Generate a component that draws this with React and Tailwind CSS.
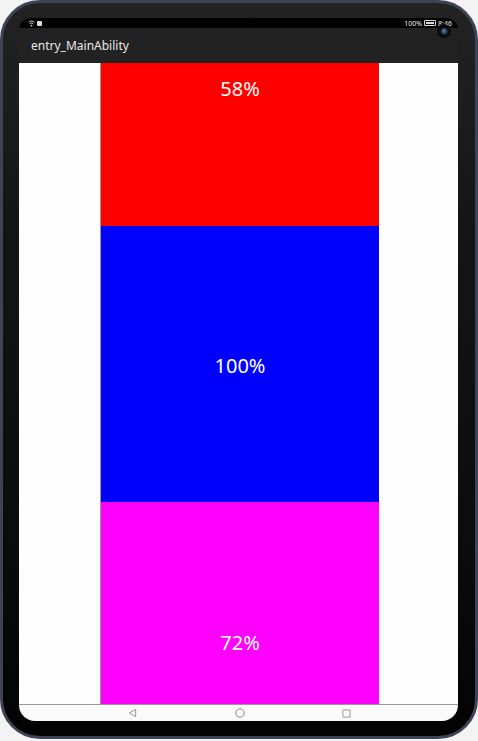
import React from "react";

export default function App() {
  return (
    <div className="w-[478px] h-[741px] bg-[#f3f3f3] font-['Noto_Sans',sans-serif]">
      <div className="relative w-[478px] h-[739px] rounded-[40px] border-[3px] border-[#3d4457] bg-[linear-gradient(180deg,#232323_0%,#151515_30%,#0a0a0a_80%,#030303_100%)] pt-[15px] pl-[16px] pr-[17px] pb-[15px]">
        <div className="flex flex-col h-full rounded-t-[12px] rounded-b-[16px] overflow-hidden">
          {/* status bar */}
          <div className="h-[10px] bg-black flex items-center justify-between pl-[9px] pr-[6px] text-white">
            <div className="flex items-center gap-[2px]">
              <svg width="7" height="7" viewBox="0 0 12 12">
                <path d="M1 4 A7 7 0 0 1 11 4" stroke="#ddd" strokeWidth="1.5" fill="none" />
                <path d="M3 6.5 A4.5 4.5 0 0 1 9 6.5" stroke="#ddd" strokeWidth="1.5" fill="none" />
                <circle cx="6" cy="9.5" r="1.5" fill="#ddd" />
              </svg>
              <div className="w-[5px] h-[5px] bg-[#ddd] rounded-[1px]" />
            </div>
            <div className="flex items-center gap-[2px] text-[7px] leading-none text-[#eee]">
              <span>100%</span>
              <div className="w-[12px] h-[6px] border border-[#ddd] rounded-[1px] p-[1px]">
                <div className="w-full h-full bg-[#ddd]" />
              </div>
              <span>8:46</span>
            </div>
          </div>
          {/* title bar */}
          <div className="h-[35px] bg-[#222222] flex items-center pl-[12px] text-[12px] text-[#e8e8e8]">
            entry_MainAbility
          </div>
          {/* content */}
          <div className="flex-1 bg-[#fdfdfd] pl-[81px] flex">
            <div className="w-[279px] flex flex-col border-l border-[#9a9a8e]">
              <div className="h-[163px] bg-[#ff0000] flex justify-center pt-[12px] text-white text-[20px] leading-[28px]">
                58%
              </div>
              <div className="h-[276px] bg-[#0000ff] flex items-center justify-center text-white text-[20px] leading-[28px] pt-[4px]">
                100%
              </div>
              <div className="h-[202px] bg-[#ff00ff] flex justify-center items-end pb-[47px] text-white text-[20px] leading-[28px]">
                72%
              </div>
            </div>
          </div>
          {/* nav bar */}
          <div className="h-[17px] bg-[#fafafa] border-t border-[#9a9a9a] flex items-center">
            <div className="w-[439px] flex items-center justify-between pl-[109px] pr-[107px]">
              <svg width="9" height="10" viewBox="0 0 10 10">
                <path d="M8.5 1 L1.5 5 L8.5 9 Z" stroke="#8a8a8a" strokeWidth="1" fill="none" strokeLinejoin="round" />
              </svg>
              <svg width="10" height="10" viewBox="0 0 10 10">
                <circle cx="5" cy="5" r="4.2" stroke="#8a8a8a" strokeWidth="1" fill="none" />
              </svg>
              <svg width="9" height="9" viewBox="0 0 10 10">
                <rect x="1" y="1" width="8" height="8" rx="0.5" stroke="#8a8a8a" strokeWidth="1" fill="none" />
              </svg>
            </div>
          </div>
        </div>
        {/* camera */}
        <div className="absolute left-[434px] top-[21px] w-[14px] h-[14px] rounded-full bg-[#0a0a0a] flex items-center justify-center">
          <div className="w-[7px] h-[7px] rounded-full bg-[radial-gradient(circle_at_40%_40%,#6a7fa8,#1f2a44_60%,#0b0f1a)]" />
        </div>
      </div>
    </div>
  );
}
